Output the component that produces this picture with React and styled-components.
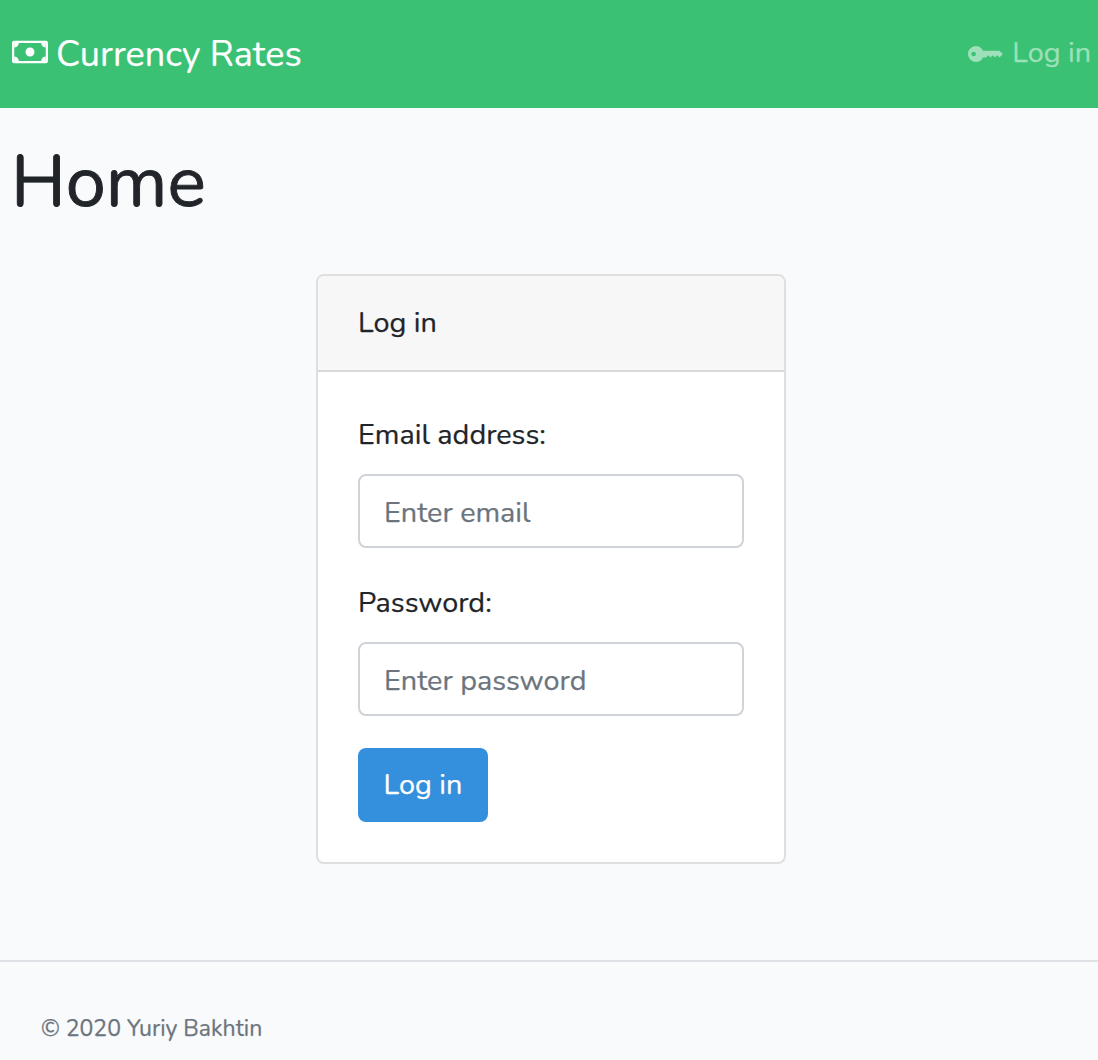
import React from 'react';
import styled, { createGlobalStyle } from 'styled-components';

const GlobalStyle = createGlobalStyle`
  *, *::before, *::after { box-sizing: border-box; }
  body {
    margin: 0;
    background: #f8fafc;
    color: #212529;
    font-family: Nunito, Lato, "Open Sans", sans-serif;
    font-size: 28.8px;
    line-height: 46px;
    -webkit-text-stroke: 0.25px currentColor;
  }
`;

const Page = styled.div`
  display: flex;
  flex-direction: column;
  height: 1060px;
  overflow: hidden;
`;

const Navbar = styled.header`
  display: flex;
  align-items: flex-start;
  justify-content: space-between;
  height: 108px;
  flex: none;
  padding: 0 7px 0 12px;
  background: #3bc174;
`;

const Icon = styled.svg`
  width: 36px;
  height: 36px;
  flex: none;
  fill: currentColor;
  margin-top: ${(p) => p.$top}px;
`;

const Brand = styled.a`
  display: flex;
  gap: 8px;
  color: #fff;
  text-decoration: none;
`;

const NavLink = styled(Brand)`
  gap: 8px;
  color: #9de0b9;
`;

const Text = styled.span`
  white-space: nowrap;
  font-size: ${(p) => p.$size || 28.8}px;
  margin-top: ${(p) => p.$top || 0}px;
`;

const Title = styled.h1`
  margin: 0;
  padding: 31px 0 0 11px;
  height: 166px;
  flex: none;
  font-size: 72px;
  font-weight: 400;
  line-height: 86px;
  -webkit-text-stroke-width: 0.9px;
`;

const Card = styled.section`
  width: 470px;
  height: 590px;
  flex: none;
  margin-left: 316px;
  background: #fff;
  border: 2px solid #dedfe0;
  border-radius: 8px;
  overflow: hidden;
`;

const CardHeader = styled.div`
  height: 96px;
  padding: 24px 40px;
  background: #f7f7f7;
  border-bottom: 2px solid #d9d9d9;
`;

const Form = styled.form`
  display: flex;
  flex-direction: column;
  align-items: stretch;
  padding: 40px;
`;

const Label = styled.label`
  display: block;
  height: 62px;
`;

const Input = styled.input`
  width: 100%;
  height: 74px;
  margin: 0 0 32px;
  padding: 13px 24px 11px;
  background: #fff;
  border: 2px solid #ced4da;
  border-radius: 8px;
  color: #495057;
  font: inherit;
  &::placeholder { color: #6c757d; opacity: 1; -webkit-text-stroke: 0.25px #6c757d; }
`;

const Button = styled.button`
  align-self: flex-start;
  width: 130px;
  height: 74px;
  padding: 0;
  border: 0;
  border-radius: 8px;
  background: #3490dc;
  color: #fff;
  font: inherit;
`;

const Footer = styled.footer`
  flex: 1;
  margin-top: 96px;
  padding: 42px 41px 0;
  border-top: 2px solid #dee2e6;
  color: #6c757d;
`;

export default function App() {
  return (
    <>
      <GlobalStyle />
      <Page>
        <Navbar>
          <Brand href="#">
            <Icon viewBox="0 0 16 16" $top={34}>
              <path fillRule="evenodd" d="M15 4H1v8h14V4zM1 3a1 1 0 0 0-1 1v8a1 1 0 0 0 1 1h14a1 1 0 0 0 1-1V4a1 1 0 0 0-1-1H1z" />
              <path d="M13 4a2 2 0 0 0 2 2V4h-2zM3 4a2 2 0 0 1-2 2V4h2zm10 8a2 2 0 0 1 2-2v2h-2zM3 12a2 2 0 0 0-2-2v2h2zm7-4a2 2 0 1 1-4 0 2 2 0 0 1 4 0z" />
            </Icon>
            <Text $size={36} $top={32}>Currency Rates</Text>
          </Brand>
          <NavLink href="#">
            <Icon viewBox="0 0 16 16" $top={36}>
              <path fillRule="evenodd" d="M3.5 11.5a3.5 3.5 0 1 1 3.163-5H14L15.5 8 14 9.5l-1-1-1 1-1-1-1 1-1-1-1 1H6.663a3.5 3.5 0 0 1-3.163 2zM2.5 9a1 1 0 1 0 0-2 1 1 0 0 0 0 2z" />
            </Icon>
            <Text $top={30}>Log in</Text>
          </NavLink>
        </Navbar>
        <Title>Home</Title>
        <Card>
          <CardHeader><Text>Log in</Text></CardHeader>
          <Form onSubmit={(e) => e.preventDefault()}>
            <Label htmlFor="email"><Text>Email address:</Text></Label>
            <Input id="email" type="email" placeholder="Enter email" />
            <Label htmlFor="password"><Text>Password:</Text></Label>
            <Input id="password" type="password" placeholder="Enter password" />
            <Button type="submit"><Text>Log in</Text></Button>
          </Form>
        </Card>
        <Footer><Text $size={23.04}>© 2020 Yuriy Bakhtin</Text></Footer>
      </Page>
    </>
  );
}
